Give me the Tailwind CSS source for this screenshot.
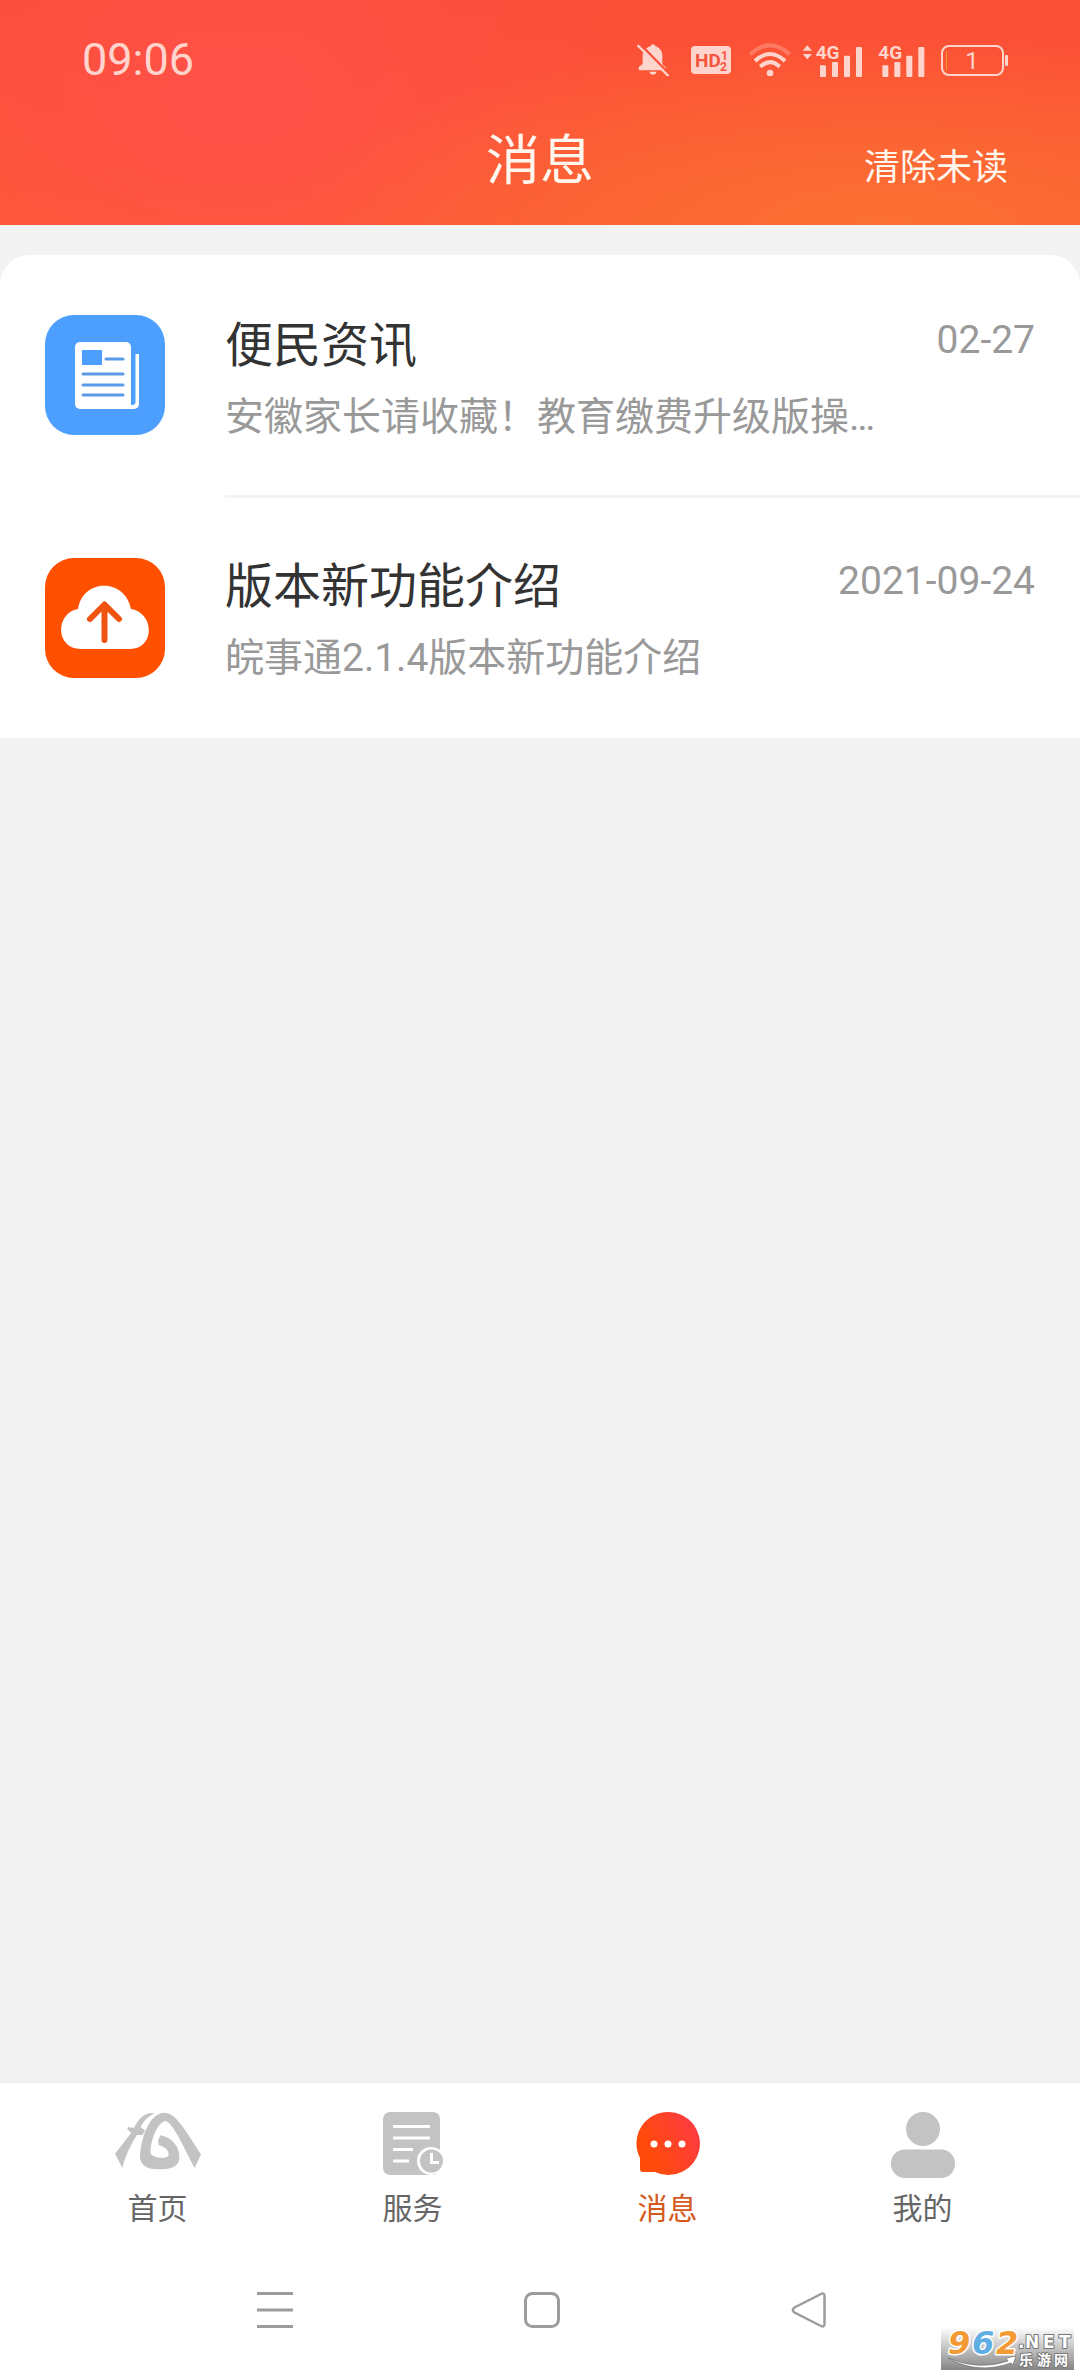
<!DOCTYPE html>
<html lang="zh-CN">
<head>
<meta charset="utf-8">
<meta name="viewport" content="width=device-width, initial-scale=1">
<title>消息</title>
<script src="https://cdn.jsdelivr.net/npm/@tailwindcss/browser@4"></script>
</head>
<body class="relative flex min-h-screen flex-col bg-[#f3f3f3] font-['Roboto','Noto_Sans_CJK_SC',sans-serif] text-[#333333]">

<header class="h-[225px] bg-[#fc5236] bg-[radial-gradient(ellipse_600px_190px_at_82%_100%,#fb7032,transparent),radial-gradient(ellipse_400px_260px_at_22%_45%,#ff5049,transparent),linear-gradient(to_bottom,#fb4e37,#fd5a35)]">
  <!-- status bar -->
  <div class="flex h-[120px] items-center justify-between pl-[82px] pr-[72px] text-[#ffd4cc]">
    <span class="text-[45px] leading-[52px]">09:06</span>
    <div class="flex items-center">
      <svg class="mr-[22px] h-[34px] w-[32px]" viewBox="0 0 96 102" fill="currentColor">
        <path d="M48 4c4 0 7 3 7 6 14 4 21 15 21 28v22c0 5 4 9 10 12v10H10c-6 0-7-8-2-12 6-4 9-7 9-12V38c0-13 9-24 24-28 0-3 3-6 7-6zM38 86h20c0 12-20 12-20 0z"/>
        <path d="M8 2l92 94" stroke="#fc5038" stroke-width="7"/>
        <path d="M2 7l92 92" stroke="currentColor" stroke-width="7"/>
      </svg>
      <svg class="mr-[18px] h-[28px] w-[40px]" viewBox="0 0 40 28">
        <rect width="40" height="28" rx="4" fill="currentColor"/>
        <g fill="#f5543f" font-family="Roboto" font-weight="700"><text x="4" y="21" font-size="19">HD</text><text x="30" y="14" font-size="12">1</text><text x="29" y="25" font-size="12">2</text></g>
      </svg>
      <svg class="mr-[11px] h-[34px] w-[42px]" viewBox="0 0 126 102" fill="none" stroke="currentColor" stroke-width="12">
        <path d="M4 34q59-54 118 0" opacity=".3"/>
        <path d="M18 54q45-42 90 0"/><path d="M34 71q29-27 58 0"/>
        <circle cx="63" cy="90" r="10" fill="currentColor" stroke="none"/>
      </svg>
      <svg class="mr-[16px] h-[34px] w-[61px] overflow-visible" viewBox="0 0 183 102" fill="currentColor">
        <path d="M2 23L16 7l14 16zM2 33l14 16 14-16z"/>
        <text x="41" y="49" font-family="Roboto" font-weight="700" font-size="57">4G</text>
        <rect x="54" y="67" width="18" height="35" rx="3"/><rect x="90" y="57" width="18" height="45" rx="3"/><rect x="126" y="38" width="18" height="64" rx="3"/><rect x="162" y="12" width="18" height="90" rx="3"/>
      </svg>
      <svg class="mr-[16px] h-[34px] w-[46px] overflow-visible" viewBox="0 0 138 102" fill="currentColor">
        <text x="-2" y="49" font-family="Roboto" font-weight="700" font-size="57">4G</text>
        <rect x="10" y="67" width="18" height="35" rx="3"/><rect x="46" y="57" width="18" height="45" rx="3"/><rect x="82" y="38" width="18" height="64" rx="3"/><rect x="118" y="12" width="18" height="90" rx="3"/>
      </svg>
      <svg class="h-[31px] w-[67px]" viewBox="0 0 67 31">
        <rect x="1" y="1" width="61" height="29" rx="7" fill="none" stroke="currentColor" stroke-width="2"/>
        <path d="M5.500 6v19" stroke="#f79a2c"/><rect x="64" y="10" width="3" height="11" rx="1" fill="currentColor"/>
        <text x="31" y="24" text-anchor="middle" font-family="Roboto" font-size="24" fill="currentColor">1</text>
      </svg>
    </div>
  </div>
  <div class="grid h-[84px] grid-cols-3 items-center pr-[72px] pl-[72px] text-[#fff6ee]">
    <h1 class="col-start-2 text-center text-[54px] leading-[84px]">消息</h1>
    <button type="button" class="justify-self-end pt-[12px] text-[36px] leading-[72px]">清除未读</button>
  </div>
</header>

<main class="flex-1 pt-[30px]">
  <ul class="rounded-t-[30px] bg-white">
    <li>
      <a href="#news" class="flex pl-[45px]">
        <svg class="mt-[60px] mr-[60px] size-[120px] shrink-0" viewBox="0 0 120 120">
          <rect width="120" height="120" rx="29" fill="#4d9fff"/>
          <path d="M86 39h8v50a5 5 0 0 1-5 5H80z" fill="#fff"/><path d="M86 37h4.500v50q0 3-3 3H86z" fill="#4d9fff"/>
          <rect x="30" y="27" width="56" height="67" rx="5" fill="#fff"/>
          <rect x="37" y="35" width="20" height="15" fill="#4d9fff"/>
          <path d="M61 44h17M38 59h40M38 70h40M38 80h40" stroke="#5b9ae6" stroke-width="3" stroke-linecap="round"/>
        </svg>
        <div class="flex h-[243px] min-w-0 flex-1 justify-between border-b-[3px] border-[#f3f3f3] pt-[60px] pr-[45px]">
          <div class="min-w-0">
            <h2 class="text-[48px] leading-[62px]">便民资讯</h2>
            <p class="mt-[13px] whitespace-nowrap text-[39px] leading-[54px] text-[#999999]">安徽家长请收藏！教育缴费升级版操…</p>
          </div>
          <time class="-ml-[200px] shrink-0 text-[39px] leading-[50px] text-[#999999]">02-27</time>
        </div>
      </a>
    </li>
    <li>
      <a href="#version" class="flex pl-[45px]">
        <svg class="mt-[60px] mr-[60px] size-[120px] shrink-0" viewBox="0 0 120 120">
          <rect width="120" height="120" rx="29" fill="#ff5000"/>
          <path d="M36 91C10 91 10 55 33 51C38 20 80 20 86 51C110 55 110 91 85 91z" fill="#fff"/>
          <path d="M59.500 82V48M45 61l14.500-14.500L74 61" fill="none" stroke="#f0530f" stroke-width="6" stroke-linecap="round" stroke-linejoin="round"/>
        </svg>
        <div class="flex h-[240px] min-w-0 flex-1 justify-between pt-[58px] pr-[45px]">
          <div class="min-w-0">
            <h2 class="text-[48px] leading-[62px]">版本新功能介绍</h2>
            <p class="mt-[13px] whitespace-nowrap text-[39px] leading-[54px] text-[#999999]">皖事通2.1.4版本新功能介绍</p>
          </div>
          <time class="shrink-0 text-[39px] leading-[50px] text-[#999999]">2021-09-24</time>
        </div>
      </a>
    </li>
  </ul>
</main>

<nav class="grid h-[163px] grid-cols-4 border-t-2 border-[#eeeeee] bg-white px-[30px] pt-[29px] text-[30px] leading-[36px] text-[#666666]">
  <a href="#home" class="flex flex-col items-center gap-[15px]">
    <svg class="h-[64px] w-[88px] pb-[6px]" viewBox="40 68 260 174" fill="#c3c3c3">
      <path d="M160 71C128 68 112 88 98 116L80 113L78 120L90 130L41 193L63 236C72 200 88 165 107 137L124 137L131 123L118 114C126 96 139 82 160 71z"/>
      <path d="M116 200C119 150 142 70 190 70C225 72 250 120 299 195L280 236C250 180 215 98 192 95C168 98 145 160 148 192C152 206 190 210 201 200C205 188 196 174 172 167L170 155L177 138C210 143 237 172 234 208C231 230 215 240 170 240C133 240 116 225 116 200z"/>
    </svg>
    <span>首页</span>
  </a>
  <a href="#service" class="flex flex-col items-center gap-[15px]">
    <svg class="h-[64px] w-[60px]" viewBox="0 0 60 64">
      <rect width="57" height="63" rx="7" fill="#c3c3c3"/>
      <path d="M10 14.500h37M10 26h37M10 37.500h20M10 49h16" stroke="#fff" stroke-width="3"/>
      <circle cx="48" cy="49" r="14" fill="#fff"/><circle cx="48.500" cy="49" r="11.500" fill="#c3c3c3"/>
      <path d="M48.500 41v9.500H56" fill="none" stroke="#fff" stroke-width="3"/>
    </svg>
    <span>服务</span>
  </a>
  <a href="#message" aria-current="page" class="flex flex-col items-center gap-[15px] text-[#d35a1c]">
    <svg class="size-[64px]" viewBox="0 0 64 64">
      <defs><linearGradient id="bubble" x1="0" y1=".8" x2="1" y2=".3"><stop offset=".2" stop-color="#ff4b0a"/><stop offset="1" stop-color="#fd3a41"/></linearGradient></defs>
      <path d="M32 0a31.500 31.500 0 1 1-13 60H7q-3 0-3-3V46A31.500 31.500 0 0 1 32 0z" fill="url(#bubble)"/>
      <g fill="#fff"><circle cx="18" cy="32" r="3.500"/><circle cx="32" cy="32" r="3.500"/><circle cx="46" cy="32" r="3.500"/></g>
    </svg>
    <span>消息</span>
  </a>
  <a href="#mine" class="flex flex-col items-center gap-[15px]">
    <svg class="h-[64px] w-[64px] overflow-visible" viewBox="0 0 64 64" fill="#c3c3c3">
      <circle cx="32" cy="17" r="17"/><rect y="37.500" width="64" height="28.500" rx="14"/>
    </svg>
    <span>我的</span>
  </a>
</nav>

<div class="grid h-[132px] grid-cols-3 items-center justify-items-center bg-white pr-[138px] pl-[142px]">
  <button type="button" aria-label="最近任务"><svg class="size-[36px]" viewBox="0 0 36 36" stroke="#9c9c9c" stroke-width="3"><path d="M0 1.500h36M0 18h36M0 34.500h36"/></svg></button>
  <button type="button" aria-label="主屏幕"><svg class="size-[36px]" viewBox="0 0 36 36" fill="none" stroke="#9c9c9c" stroke-width="3"><rect x="1.500" y="1.500" width="33" height="33" rx="7"/></svg></button>
  <button type="button" aria-label="返回"><svg class="size-[36px]" viewBox="0 0 36 36" fill="none" stroke="#9c9c9c" stroke-width="2.500"><path d="M29 2.500Q33.500 0 33.500 4V32Q33.500 36 29 33.500L3.500 20.500Q0 18 3.500 15.500z"/></svg></button>
</div>

<!-- site badge over the bottom corner -->
<svg class="absolute right-[6px] bottom-[6px] h-[43px] w-[133px]" viewBox="0 0 133 43">
  <defs><linearGradient id="badge" x1="0" y1="0" x2="0" y2="1"><stop offset="0" stop-color="#ffffff"/><stop offset="1" stop-color="#858585"/></linearGradient></defs>
  <rect width="133" height="43" fill="url(#badge)"/>
  <g font-family="DejaVu Sans" font-weight="700" paint-order="stroke" stroke-linejoin="round">
    <text y="27" font-size="32" font-style="italic" stroke="#fff" stroke-width="3"><tspan x="7" fill="#f39a35">9</tspan><tspan x="31" fill="#5eaee3">6</tspan><tspan x="55" fill="#f39a35">2</tspan></text>
    <text y="21" font-size="17" fill="#fff" stroke="#777" stroke-width="2"><tspan x="77">.</tspan><tspan x="84">N</tspan><tspan x="102">E</tspan><tspan x="118">T</tspan></text>
    <text y="38" font-size="14" font-family="Noto Sans CJK SC" fill="#fff" stroke="#777" stroke-width="2"><tspan x="78">乐</tspan><tspan x="96">游</tspan><tspan x="113">网</tspan></text>
  </g>
  <path d="M7 31Q38 44 67 34L65 31L75 29L72 38L70 36Q36 48 7 31z" fill="#fff" stroke="#777" stroke-width=".8"/>
</svg>
</body>
</html>
